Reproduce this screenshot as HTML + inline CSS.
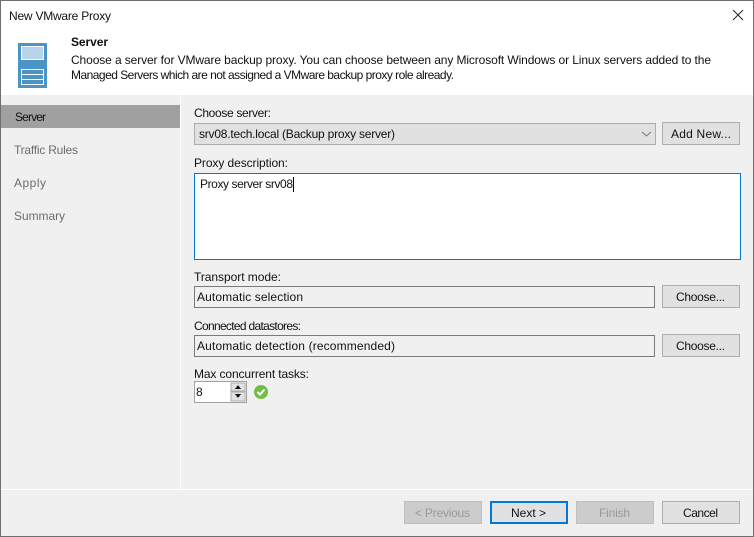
<!DOCTYPE html>
<html><head><meta charset="utf-8"><style>
html,body{margin:0;padding:0;background:#fff}
svg{display:block}
text{font-family:"Liberation Sans",sans-serif;font-size:12px;fill:#111}
.d{fill:#9a9a9a}.g{fill:#6d6d6d}
</style></head><body>
<svg width="754" height="537" viewBox="0 0 754 537" xmlns="http://www.w3.org/2000/svg" shape-rendering="crispEdges">
<rect width="754" height="537" fill="#6f6f6f"/>
<rect x="1" y="1" width="752" height="535" fill="#fff"/>
<rect x="1" y="95" width="752" height="441" fill="#f0f0f0"/>
<rect x="180" y="95" width="1" height="394" fill="#fff"/>
<rect x="1" y="489" width="752" height="1" fill="#fff"/>
<rect x="1" y="105" width="179" height="23" fill="#a0a0a0"/>
<text x="9" y="20" textLength="102">New VMware Proxy</text>
<path d="M733 10L743 20M743 10L733 20" stroke="#222" fill="none" shape-rendering="auto"/>
<rect x="18" y="43" width="29" height="45" fill="#4a94c6"/>
<rect x="21.500" y="46.500" width="22" height="13" fill="#b9d3ea" stroke="#fff"/>
<rect x="21.500" y="69.500" width="22" height="15" fill="#4a94c6" stroke="#fff"/>
<path d="M22 74.500H43M22 79.500H43" stroke="#fff"/>
<text x="71" y="46" textLength="37" font-weight="bold">Server</text>
<text x="71" y="64" textLength="640">Choose a server for VMware backup proxy. You can choose between any Microsoft Windows or Linux servers added to the</text>
<text x="71" y="79" textLength="383">Managed Servers which are not assigned a VMware backup proxy role already.</text>
<text x="15" y="121" textLength="31">Server</text>
<text class="g" x="14" y="154" textLength="64">Traffic Rules</text>
<text class="g" x="14" y="187" textLength="32">Apply</text>
<text class="g" x="14" y="220" textLength="51">Summary</text>
<text x="194" y="117" textLength="77">Choose server:</text>
<rect x="194.500" y="123.500" width="461" height="21" fill="#e1e1e1" stroke="#adadad"/>
<text x="199" y="138" textLength="196">srv08.tech.local (Backup proxy server)</text>
<path d="M642 132L646.500 136L651 132" stroke="#777" fill="none" shape-rendering="auto"/>
<rect x="662.500" y="122.500" width="77" height="22" fill="#e1e1e1" stroke="#adadad"/>
<text x="671" y="138" textLength="60">Add New...</text>
<text x="194" y="167" textLength="94">Proxy description:</text>
<rect x="194.500" y="173.500" width="546" height="86" fill="#fff" stroke="#0078d7"/>
<text x="200" y="188" textLength="93">Proxy server srv08</text>
<rect x="293" y="177" width="1" height="15" fill="#000"/>
<text x="194" y="281" textLength="87">Transport mode:</text>
<rect x="194.500" y="286.500" width="460" height="21" fill="#f0f0f0" stroke="#7a7a7a"/>
<text x="197" y="301" textLength="106">Automatic selection</text>
<rect x="662.500" y="285.500" width="77" height="22" fill="#e1e1e1" stroke="#adadad"/>
<text x="676" y="301" textLength="49">Choose...</text>
<text x="194" y="330" textLength="107">Connected datastores:</text>
<rect x="194.500" y="335.500" width="460" height="21" fill="#f0f0f0" stroke="#7a7a7a"/>
<text x="197" y="350" textLength="198">Automatic detection (recommended)</text>
<rect x="662.500" y="334.500" width="77" height="22" fill="#e1e1e1" stroke="#adadad"/>
<text x="676" y="350" textLength="49">Choose...</text>
<text x="194" y="378" textLength="115">Max concurrent tasks:</text>
<rect x="194.500" y="381.500" width="52" height="21" fill="#fff" stroke="#a0a0a0"/>
<text x="196" y="396">8</text>
<rect x="231" y="383" width="14" height="8" fill="#e1e1e1" stroke="#adadad"/>
<rect x="231" y="392" width="14" height="9" fill="#e1e1e1" stroke="#adadad"/>
<path d="M238 385L241 389H235Z M238 398L241 394H235Z" fill="#111"/>
<circle cx="261" cy="392" r="7" fill="#72bd46" shape-rendering="auto"/>
<path d="M257.500 392L260 394.500L264.500 389.500" stroke="#fff" stroke-width="2" fill="none" shape-rendering="auto"/>
<rect x="404.500" y="501.500" width="77" height="22" fill="#cccccc" stroke="#bfbfbf"/>
<text class="d" x="415" y="517" textLength="55">&lt; Previous</text>
<rect x="491" y="502" width="76" height="21" fill="#e1e1e1" stroke="#0078d7" stroke-width="2"/>
<text x="511" y="517" textLength="35">Next &gt;</text>
<rect x="576.500" y="501.500" width="77" height="22" fill="#cccccc" stroke="#bfbfbf"/>
<text class="d" x="599" y="517" textLength="31">Finish</text>
<rect x="662.500" y="501.500" width="77" height="22" fill="#e1e1e1" stroke="#adadad"/>
<text x="683" y="517" textLength="35">Cancel</text>
</svg>
</body></html>
